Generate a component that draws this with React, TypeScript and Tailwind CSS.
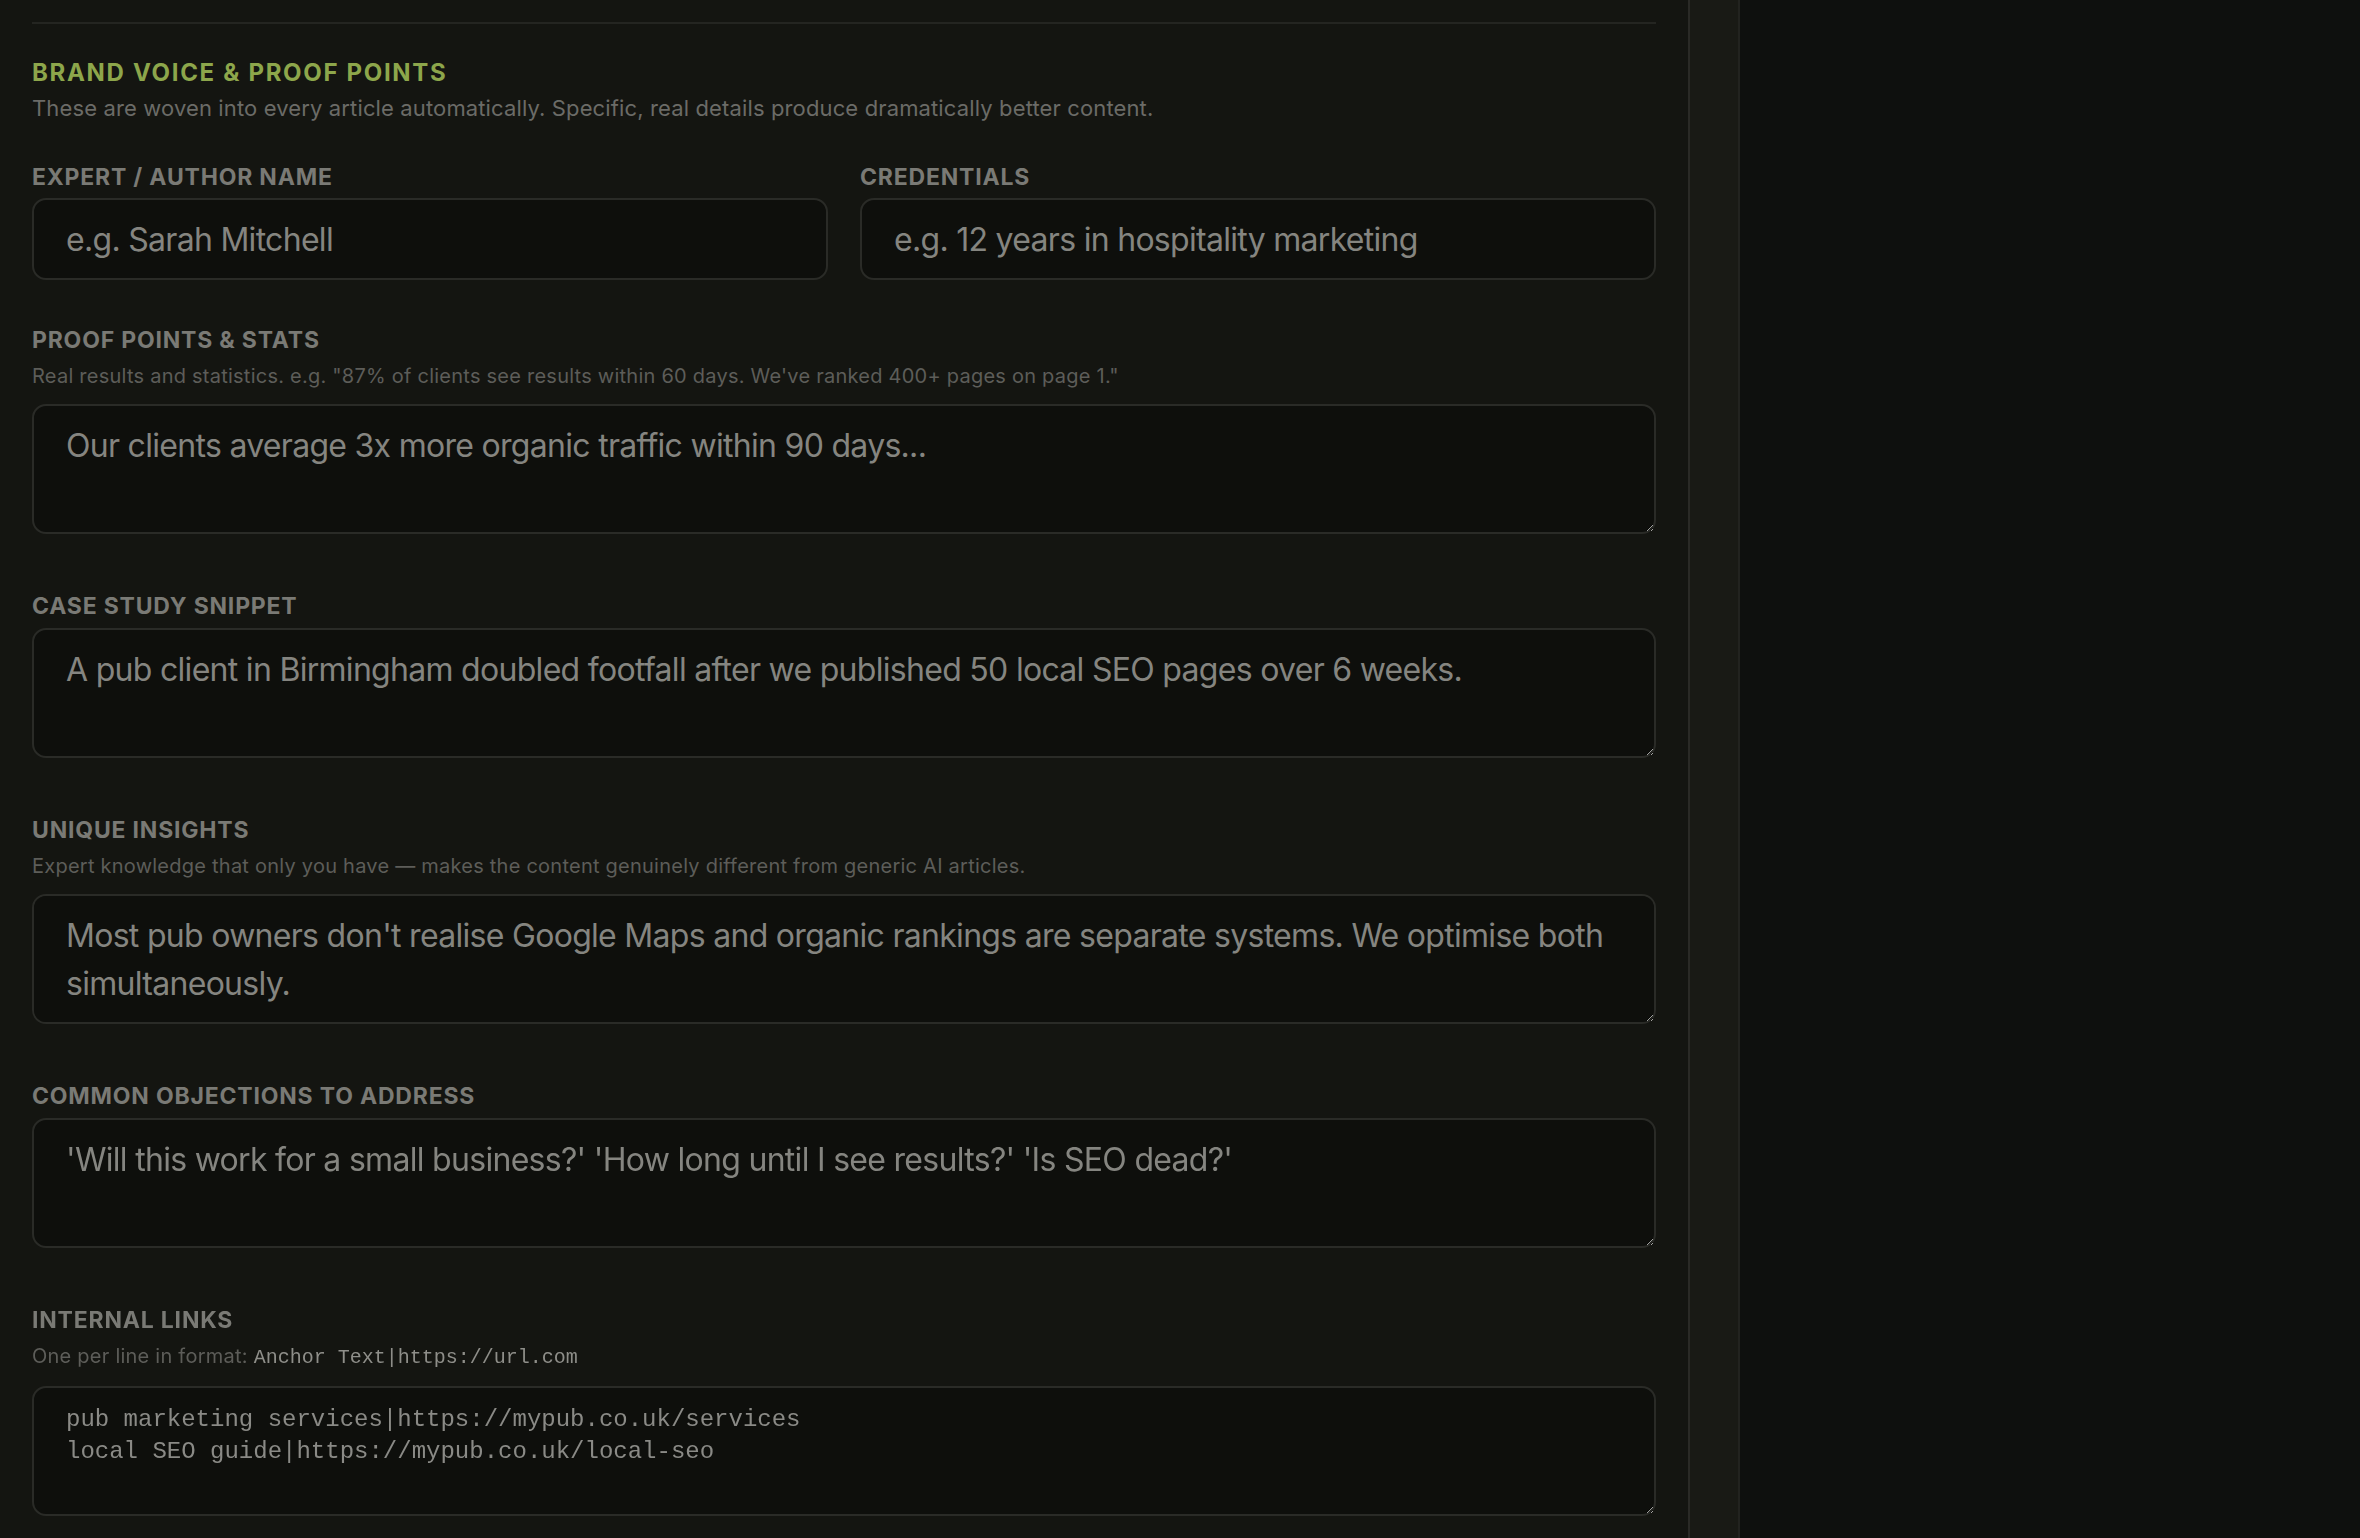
import React from "react";

const sans = "font-['Inter','Noto_Sans',sans-serif]";

function Label({ children }: { children: React.ReactNode }) {
  return (
    <div className={`${sans} text-[23px] leading-[28px] font-bold tracking-[0.035em] uppercase text-[#7a7a75]`}>
      {children}
    </div>
  );
}

function Hint({ children }: { children: React.ReactNode }) {
  return (
    <div className={`${sans} mt-2 text-[20px] leading-[28px] tracking-[0.012em] text-[#5d5d59]`}>{children}</div>
  );
}

const boxBase =
  "block w-full rounded-[14px] border-2 border-[#2a2b27] bg-[#0e0f0c] outline-none [color-scheme:dark]";

function Area({ placeholder, mt, mono }: { placeholder: string; mt: string; mono?: boolean }) {
  return (
    <textarea
      readOnly
      placeholder={placeholder}
      className={`${boxBase} ${mt} h-[130px] px-8 py-4 ${
        mono
          ? "font-['Liberation_Mono','DejaVu_Sans_Mono',monospace] text-[24px] leading-[32px] placeholder:text-[#8a8a86]"
          : `${sans} text-[32px] leading-[48px] tracking-[-0.022em] placeholder:text-[#858580]`
      }`}
    />
  );
}

function Input({ placeholder }: { placeholder: string }) {
  return (
    <input
      readOnly
      placeholder={placeholder}
      className={`${boxBase} ${sans} mt-[7px] h-[82px] px-8 text-[32px] tracking-[-0.022em] placeholder:text-[#858580]`}
    />
  );
}

export default function App() {
  return (
    <div className="flex h-[1538px] w-[2360px] overflow-hidden bg-[#0e100e] antialiased">
      <div className="w-[1690px] shrink-0 border-r-2 border-[#2a2a26] bg-[#141511] px-8">
        <section className="mt-[22px] border-t-2 border-[#242521] pt-[33px]">
          <h2 className={`${sans} text-[24px] leading-[32px] font-bold tracking-[0.07em] text-[#8da64b]`}>
            BRAND VOICE &amp; PROOF POINTS
          </h2>
          <p className={`${sans} mt-1 text-[22px] leading-[30px] tracking-[0.006em] text-[#6b6b67]`}>
            These are woven into every article automatically. Specific, real details produce dramatically better
            content.
          </p>

          <div className="mt-10 grid grid-cols-2 gap-8">
            <div>
              <Label>Expert / Author Name</Label>
              <Input placeholder="e.g. Sarah Mitchell" />
            </div>
            <div>
              <Label>Credentials</Label>
              <Input placeholder="e.g. 12 years in hospitality marketing" />
            </div>
          </div>

          <div className="mt-[46px]">
            <Label>Proof Points &amp; Stats</Label>
            <Hint>
              Real results and statistics. e.g. "87% of clients see results within 60 days. We've ranked 400+ pages on
              page 1."
            </Hint>
            <Area mt="mt-[14px]" placeholder="Our clients average 3x more organic traffic within 90 days..." />
          </div>

          <div className="mt-[58px]">
            <Label>Case Study Snippet</Label>
            <Area
              mt="mt-2"
              placeholder="A pub client in Birmingham doubled footfall after we published 50 local SEO pages over 6 weeks."
            />
          </div>

          <div className="mt-[58px]">
            <Label>Unique Insights</Label>
            <Hint>Expert knowledge that only you have — makes the content genuinely different from generic AI articles.</Hint>
            <Area
              mt="mt-[14px]"
              placeholder="Most pub owners don't realise Google Maps and organic rankings are separate systems. We optimise both simultaneously."
            />
          </div>

          <div className="mt-[58px]">
            <Label>Common Objections to Address</Label>
            <Area
              mt="mt-2"
              placeholder="'Will this work for a small business?' 'How long until I see results?' 'Is SEO dead?'"
            />
          </div>

          <div className="mt-[58px]">
            <Label>Internal Links</Label>
            <Hint>
              One per line in format:{" "}
              <span className="font-['Liberation_Mono','DejaVu_Sans_Mono',monospace] tracking-normal text-[#8e8e89]">
                Anchor Text|https://url.com
              </span>
            </Hint>
            <Area
              mono
              mt="mt-[14px]"
              placeholder={"pub marketing services|https://mypub.co.uk/services\nlocal SEO guide|https://mypub.co.uk/local-seo"}
            />
          </div>
        </section>
      </div>
      <div className="w-[50px] shrink-0 border-r-2 border-[#22231f] bg-[#191a15]" />
      <div className="flex-1 bg-[#0e100e]" />
    </div>
  );
}
